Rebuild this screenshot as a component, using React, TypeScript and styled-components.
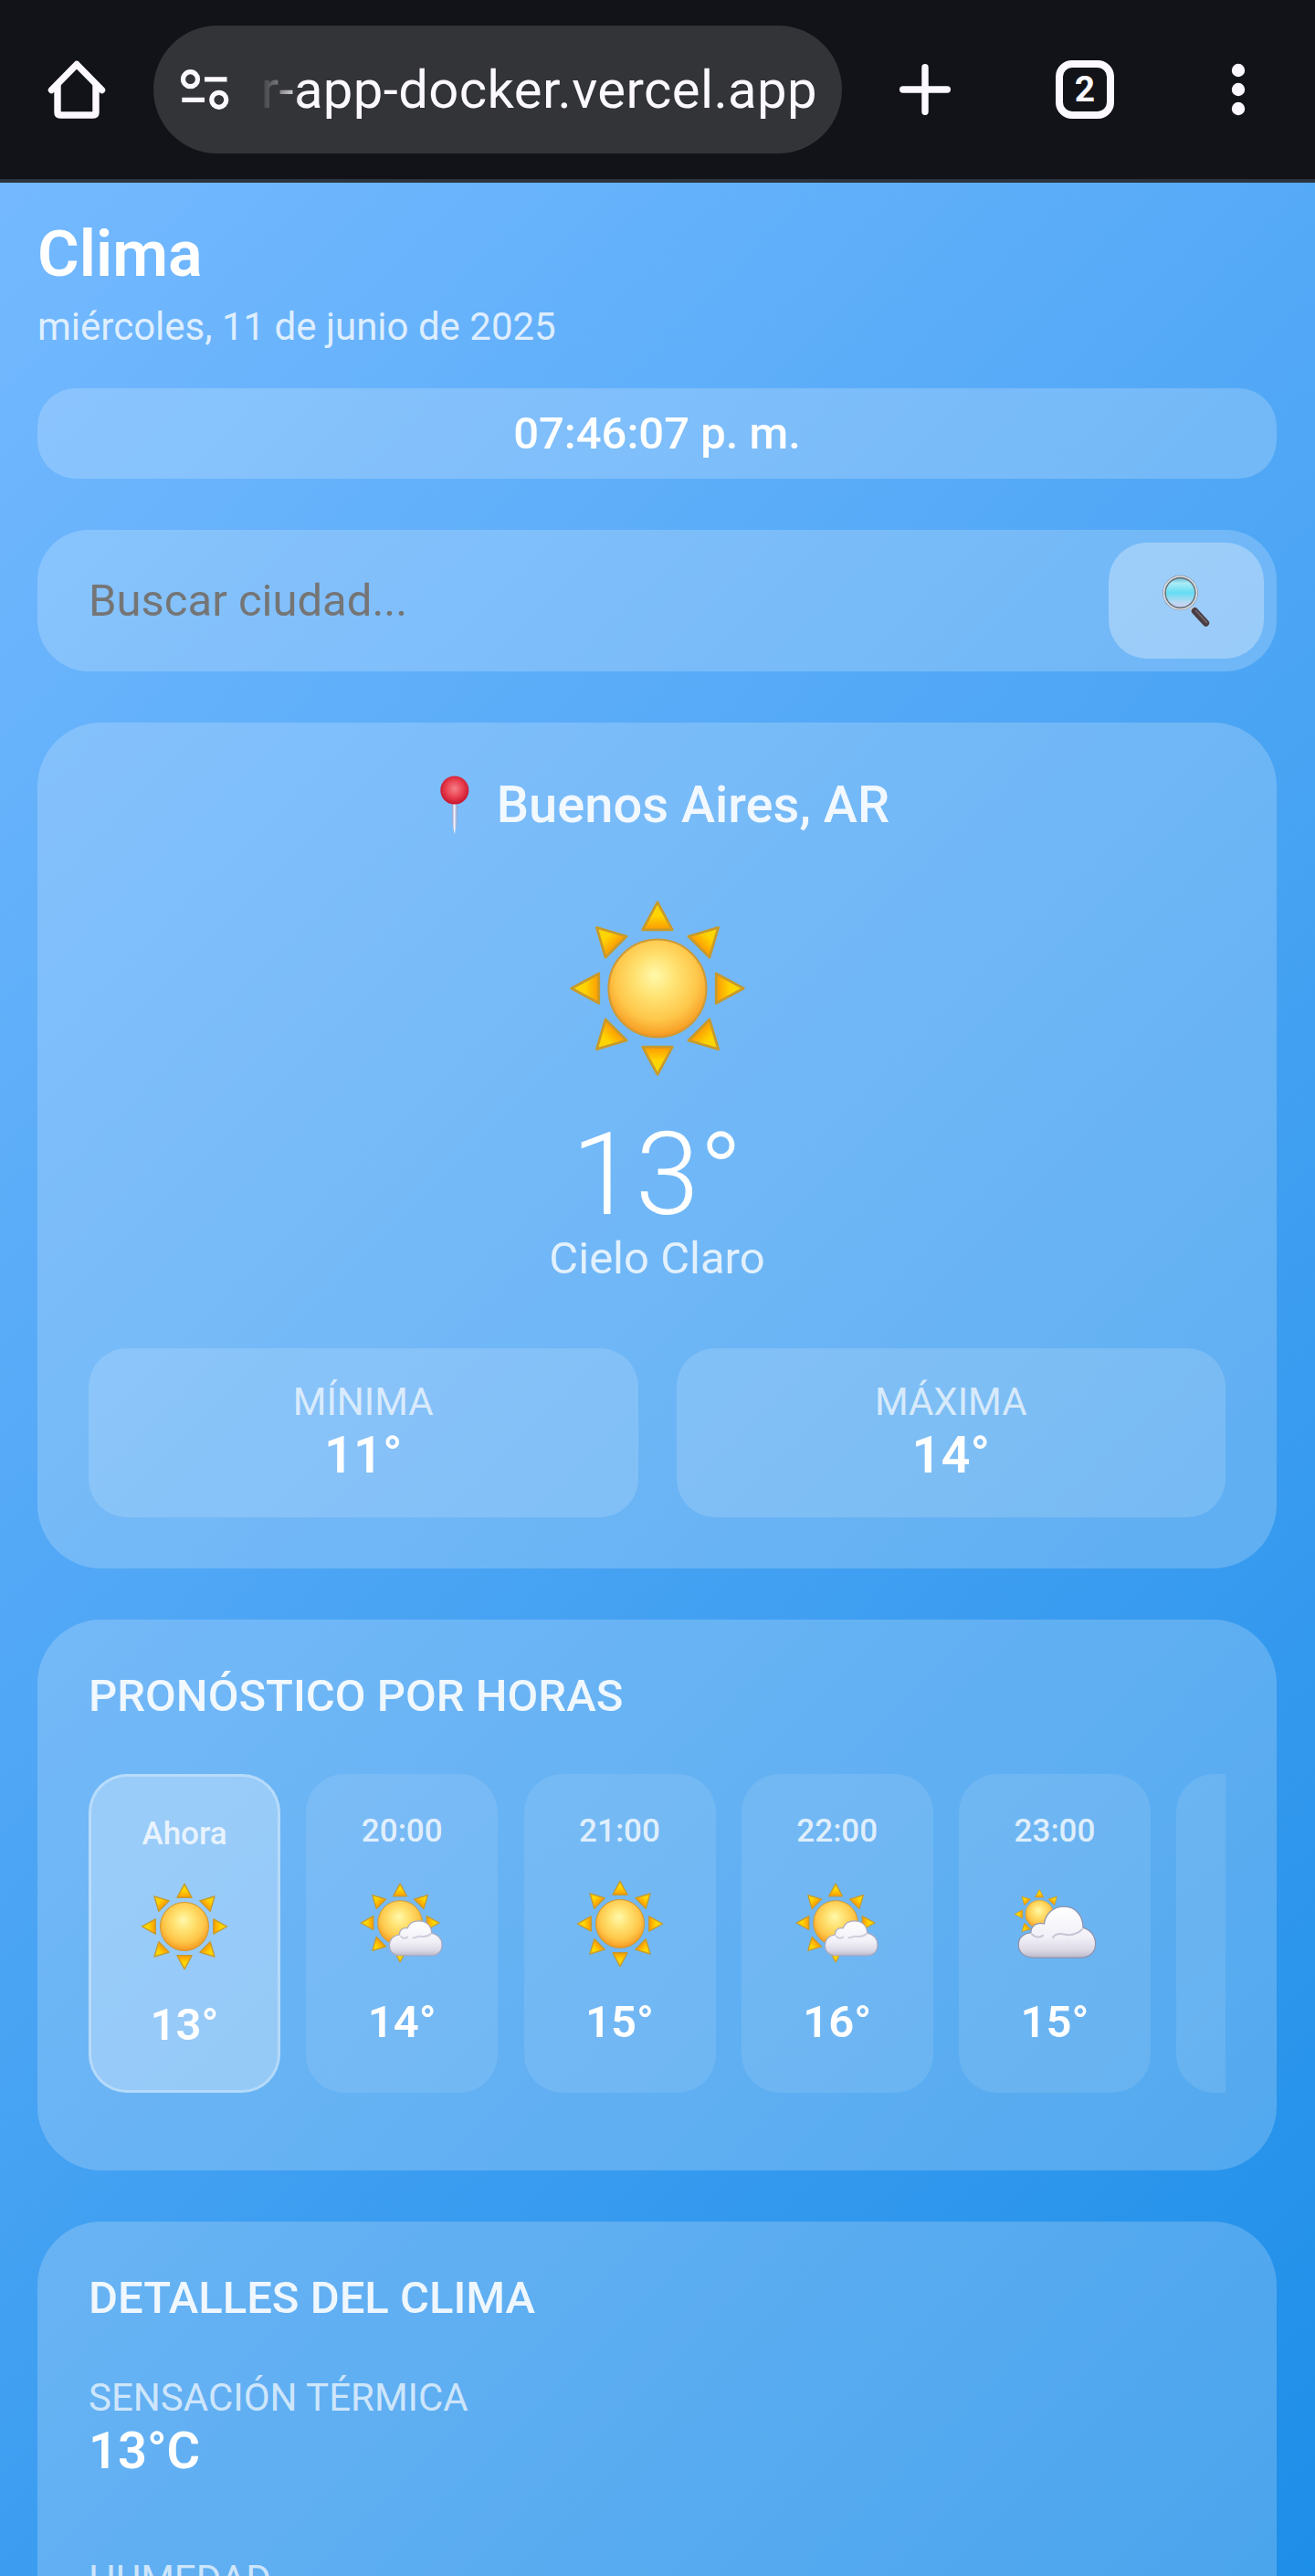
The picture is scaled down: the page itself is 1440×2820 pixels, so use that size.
import React, { useId } from 'react';
import styled, { createGlobalStyle, css } from 'styled-components';

const GlobalStyle = createGlobalStyle`
  *, *::before, *::after { box-sizing: border-box; }
  html, body { margin: 0; padding: 0; }
  body {
    font-family: Roboto, "Liberation Sans", sans-serif;
    color: #fff;
    background: #121318;
  }
`;

/* ---------- browser bar ---------- */

const Screen = styled.div`
  display: flex;
  flex-direction: column;
  width: 1440px;
  height: 2820px;
  overflow: hidden;
`;

const BrowserBar = styled.header`
  display: flex;
  align-items: center;
  flex: none;
  height: 200px;
  background: #121318;
  border-bottom: 4px solid #2d343d;
`;

const BarButton = styled.div<{ $width: number }>`
  display: flex;
  align-items: center;
  justify-content: center;
  width: ${({ $width }) => $width}px;
  height: 196px;
`;

const AddressPill = styled.div`
  display: flex;
  align-items: center;
  width: 754px;
  height: 140px;
  padding: 0 27px 0 28px;
  border-radius: 70px;
  background: #333438;
  overflow: hidden;
`;

const AddressText = styled.div`
  flex: 1;
  display: flex;
  justify-content: flex-end;
  margin-left: 24px;
  font-size: 58px;
  line-height: 80px;
  letter-spacing: 0.4px;
  color: #fbf9ff;
  white-space: nowrap;
  overflow: hidden;
  mask-image: linear-gradient(to right, transparent 6px, rgba(0, 0, 0, 0.3) 26px, #000 54px);
`;

const TabCount = styled.div`
  display: flex;
  align-items: center;
  justify-content: center;
  width: 64px;
  height: 64px;
  border: 8px solid #fbf9ff;
  border-radius: 18px;
  font-size: 39px;
  line-height: 40px;
  font-weight: 700;
  color: #fbf9ff;
`;

/* ---------- weather page ---------- */

const Page = styled.main`
  flex: none;
  display: flex;
  flex-direction: column;
  height: 3580px;
  padding: 36px 42px 0 41px;
  background: linear-gradient(135deg, #74b9ff 0%, #0984e3 100%);
`;

const Title = styled.h1`
  margin: 0;
  font-size: 70px;
  line-height: 84px;
  font-weight: 600;
`;

const DateLine = styled.p`
  margin: 13px 0 0;
  font-size: 42px;
  line-height: 50px;
  color: rgba(255, 255, 255, 0.8);
`;

const Clock = styled.div`
  margin-top: 42px;
  height: 99px;
  line-height: 99px;
  border-radius: 42px;
  background: rgba(255, 255, 255, 0.2);
  font-size: 49px;
  font-weight: 500;
  text-align: center;
`;

const SearchBox = styled.div`
  display: flex;
  align-items: center;
  margin-top: 56px;
  height: 155px;
  padding: 0 14px 0 56px;
  border-radius: 56px;
  background: rgba(255, 255, 255, 0.2);
`;

const SearchInput = styled.input`
  flex: 1;
  min-width: 0;
  padding: 0;
  border: 0;
  outline: 0;
  background: transparent;
  font: 400 49px/60px Roboto, "Liberation Sans", sans-serif;
  color: #fff;
  &::placeholder {
    color: #757575;
    opacity: 1;
  }
`;

const SearchButton = styled.button`
  display: flex;
  align-items: center;
  justify-content: center;
  width: 170px;
  height: 127px;
  padding: 0;
  border: 0;
  border-radius: 42px;
  background: rgba(255, 255, 255, 0.3);
`;

const Card = styled.section<{ $height: number }>`
  flex: none;
  display: flex;
  flex-direction: column;
  margin-top: 56px;
  height: ${({ $height }) => $height}px;
  padding: 56px;
  border-radius: 70px;
  background: rgba(255, 255, 255, 0.2);
`;

const Location = styled.div`
  display: flex;
  align-items: center;
  justify-content: center;
  gap: 28px;
  padding: 1px 0 0 15px;
  font-size: 56px;
  line-height: 66px;
  font-weight: 500;
  color: rgba(255, 255, 255, 0.9);
`;

const Current = styled.div`
  display: flex;
  flex-direction: column;
  align-items: center;
  margin-top: 71px;
`;

const Temperature = styled.div`
  height: 127px;
  margin-top: 37px;
  font-size: 126px;
  line-height: 140px;
  font-weight: 300;
`;

const Condition = styled.div`
  margin-top: 7px;
  font-size: 49px;
  line-height: 56px;
  color: rgba(255, 255, 255, 0.8);
`;

const RangeRow = styled.div`
  display: grid;
  grid-template-columns: 1fr 1fr;
  gap: 42px;
  margin-top: 70px;
`;

const RangeBox = styled.div`
  display: flex;
  flex-direction: column;
  align-items: center;
  height: 185px;
  padding-top: 34px;
  border-radius: 42px;
  background: rgba(255, 255, 255, 0.15);
`;

const Label = styled.div`
  font-size: 42px;
  line-height: 50px;
  color: rgba(255, 255, 255, 0.7);
`;

const Value = styled.div`
  font-size: 56px;
  line-height: 67px;
  font-weight: 600;
`;

const SectionTitle = styled.h2`
  margin: 0;
  font-size: 49px;
  line-height: 56px;
  font-weight: 500;
  color: rgba(255, 255, 255, 0.9);
`;

const HourStrip = styled.div`
  display: flex;
  gap: 28.25px;
  margin-top: 57px;
  overflow: hidden;
`;

const HourItem = styled.div<{ $active?: boolean }>`
  flex: none;
  display: flex;
  flex-direction: column;
  align-items: center;
  width: 210px;
  height: 349px;
  padding-top: 42px;
  border-radius: 42px;
  background: rgba(255, 255, 255, 0.1);
  ${({ $active }) =>
    $active &&
    css`
      background: rgba(255, 255, 255, 0.3);
      border: 3px solid rgba(255, 255, 255, 0.3);
    `}
`;

const HourTime = styled.div`
  font-size: 35px;
  line-height: 42px;
  font-weight: 500;
  color: rgba(255, 255, 255, 0.8);
`;

const HourIcon = styled.div`
  display: flex;
  margin: 32px 0;
`;

const HourTemp = styled.div`
  font-size: 49px;
  line-height: 56px;
  font-weight: 600;
`;

const DetailList = styled.div`
  display: flex;
  flex-direction: column;
  gap: 82px;
  margin-top: 56px;
`;

/* ---------- drawings ---------- */

const HomeIcon = () => (
  <svg width="72" height="72" viewBox="48 62 72 72" fill="none" stroke="#fbf9ff" strokeWidth="7.4" strokeLinecap="round" strokeLinejoin="round">
    <path d="M56.5 98.5 L84 70.5 L111.5 98.5" />
    <path d="M63 93 V123 Q63 126 66 126 H102 Q105 126 105 123 V93" />
  </svg>
);

const SiteSettingsIcon = () => (
  <svg width="56" height="50" viewBox="196 73 56 50" fill="none" stroke="#fbf9ff" strokeWidth="5.2">
    <circle cx="208.5" cy="86.7" r="8" />
    <path d="M224 86.9 H248.5 M199.3 109.3 H224" />
    <circle cx="239.8" cy="109.3" r="8" />
  </svg>
);

const PlusIcon = () => (
  <svg width="56" height="56" viewBox="0 0 56 56" stroke="#fbf9ff" strokeWidth="7.4" strokeLinecap="round">
    <path d="M3.7 28 H52.3 M28 3.7 V52.3" />
  </svg>
);

const DotsIcon = () => (
  <svg width="16" height="58" viewBox="0 0 16 58" fill="#fbf9ff">
    <circle cx="8" cy="8" r="7.2" />
    <circle cx="8" cy="29" r="7.2" />
    <circle cx="8" cy="50" r="7.2" />
  </svg>
);

const RAY_ANGLES = [0, 45, 90, 135, 180, 225, 270, 315];

const SunShape = ({ id }: { id: string }) => (
  <>
    <defs>
      <linearGradient id={`${id}r`} x1="0" y1="0" x2="0" y2="1">
        <stop offset="0" stopColor="#f6d60c" />
        <stop offset="0.5" stopColor="#ffd400" />
        <stop offset="1" stopColor="#fb9a05" />
      </linearGradient>
      <radialGradient id={`${id}d`} cx="0.5" cy="0.42" r="0.6" fx="0.47" fy="0.36">
        <stop offset="0" stopColor="#fff9ab" />
        <stop offset="0.35" stopColor="#ffe272" />
        <stop offset="0.7" stopColor="#fec74a" />
        <stop offset="0.9" stopColor="#f8a52a" />
        <stop offset="1" stopColor="#ee8a20" />
      </radialGradient>
    </defs>
    {RAY_ANGLES.map((angle) => (
      <path
        key={angle}
        d="M50 1.4 L58.4 16.9 H41.6 Z"
        transform={`rotate(${angle} 50 50)`}
        fill={`url(#${id}r)`}
        stroke="#c79a2b"
        strokeWidth="1.4"
        strokeLinejoin="round"
      />
    ))}
    <circle cx="50" cy="50" r="27.6" fill={`url(#${id}d)`} stroke="#cf9a35" strokeWidth="1.1" />
  </>
);

const cleanId = (id: string) => id.replace(/[^a-zA-Z0-9]/g, '');

const Sun = ({ size }: { size: number }) => {
  const id = cleanId(useId());
  return (
    <svg width={size} height={size} viewBox="0 0 100 100">
      <SunShape id={id} />
    </svg>
  );
};

const CloudDefs = ({ id }: { id: string }) => (
  <defs>
    <linearGradient id={`${id}c`} x1="0" y1="0" x2="0" y2="1">
      <stop offset="0" stopColor="#ffffff" />
      <stop offset="0.6" stopColor="#f1f0f7" />
      <stop offset="0.85" stopColor="#dcd9e6" />
      <stop offset="1" stopColor="#bcb9cb" />
    </linearGradient>
  </defs>
);

const SunSmallCloud = () => {
  const id = cleanId(useId());
  return (
    <svg width="96" height="96" viewBox="0 0 100 100">
      <CloudDefs id={id} />
      <g transform="translate(2 3) scale(.92)">
        <SunShape id={id} />
      </g>
      <path
        d="M48 86.2 C40 86.2 35.8 81 35.8 74.5 C35.8 68 40.5 63 47.5 62.5 C46.8 57.5 51 54 56.5 55 C58.5 49.5 63.5 46.8 69.5 46.8 C78 46.8 83.5 52 84 60.5 C92 62.5 95.8 67.5 95.8 74 C95.8 81.5 91 86.2 83.5 86.2 Z"
        fill={`url(#${id}c)`}
        stroke="#a9a9c0"
        strokeWidth="1.2"
      />
      <path
        d="M49 64.5 C51 66.8 54 66.8 56.5 65.2 M63 65.8 C66 66.8 67.5 63.5 71.5 64.4 C76.5 65.2 80.5 64 83 61.5"
        fill="none"
        stroke="#cfcddb"
        strokeWidth="2"
        strokeLinecap="round"
      />
    </svg>
  );
};

const SunBigCloud = () => {
  const id = cleanId(useId());
  return (
    <svg width="96" height="96" viewBox="0 0 100 100">
      <CloudDefs id={id} />
      <g transform="translate(3.5 10) scale(.58)">
        <SunShape id={id} />
      </g>
      <path
        d="M27 88.6 C15 88.6 8.6 82.5 8.6 74 C8.6 66 14.5 60.8 22.8 60.3 C22.5 52.5 30 47.3 38 50 C39 39.5 48 30.4 60.5 30.4 C73.5 30.4 82.3 40.5 82.3 54.5 C91.5 57 96.5 64.5 96.5 73 C96.5 82.5 90 88.6 78.5 88.6 Z"
        fill={`url(#${id}c)`}
        stroke="#8f93ac"
        strokeWidth="1.3"
      />
      <path
        d="M24 62 C27 65.5 32 66 36.5 63.5 M48 65.5 C51 60.5 57 61 62 62.2 C69 63.8 76.5 61.5 81 56.5"
        fill="none"
        stroke="#c8c6d5"
        strokeWidth="2.2"
        strokeLinecap="round"
      />
    </svg>
  );
};

const PinIcon = () => (
  <svg width="36" height="66" viewBox="0 0 36 66">
    <defs>
      <radialGradient id="pinHead" cx="0.5" cy="0.45" r="0.56">
        <stop offset="0" stopColor="#f6808a" />
        <stop offset="0.55" stopColor="#e9404f" />
        <stop offset="1" stopColor="#c4122c" />
      </radialGradient>
      <linearGradient id="pinNeedle" x1="0" y1="0" x2="1" y2="0">
        <stop offset="0" stopColor="#8b93b8" />
        <stop offset="0.45" stopColor="#eef2ff" />
        <stop offset="1" stopColor="#8f96ba" />
      </linearGradient>
    </defs>
    <path d="M14.8 30 H20.8 L20.2 55 L17.8 65 L15.4 55 Z" fill="url(#pinNeedle)" />
    <circle cx="17.8" cy="17" r="15.5" fill="url(#pinHead)" />
  </svg>
);

const MagnifierIcon = () => (
  <svg width="54" height="58" viewBox="0 0 54 58">
    <defs>
      <linearGradient id="lens" x1="0" y1="0" x2="0" y2="1">
        <stop offset="0" stopColor="#5fb6cc" />
        <stop offset="0.2" stopColor="#a9ecf6" />
        <stop offset="0.5" stopColor="#63dcf2" />
        <stop offset="0.8" stopColor="#b9d9f3" />
        <stop offset="1" stopColor="#d2cdf0" />
      </linearGradient>
    </defs>
    <path d="M32.5 36.5 L36.5 41" stroke="#d9cfc8" strokeWidth="4" />
    <path d="M36.5 40 L48.5 53" stroke="#4a3d44" strokeWidth="7.4" strokeLinecap="round" />
    <path d="M37.5 39.5 L49.5 52.5" stroke="#75676e" strokeWidth="1.6" strokeLinecap="round" />
    <circle cx="20.5" cy="20" r="17.4" fill="url(#lens)" stroke="#6c7680" strokeWidth="3.6" />
    <circle cx="20.5" cy="20" r="18" fill="none" stroke="#dfe0e2" strokeWidth="1.7" />
  </svg>
);

/* ---------- data ---------- */

type Sky = 'sun' | 'sunSmallCloud' | 'sunBigCloud';

const hours: { time: string; sky: Sky; temp: string }[] = [
  { time: 'Ahora', sky: 'sun', temp: '13°' },
  { time: '20:00', sky: 'sunSmallCloud', temp: '14°' },
  { time: '21:00', sky: 'sun', temp: '15°' },
  { time: '22:00', sky: 'sunSmallCloud', temp: '16°' },
  { time: '23:00', sky: 'sunBigCloud', temp: '15°' },
];

const SkyIcon = ({ sky }: { sky: Sky }) => {
  if (sky === 'sun') return <Sun size={96} />;
  if (sky === 'sunSmallCloud') return <SunSmallCloud />;
  return <SunBigCloud />;
};

export default function App() {
  return (
    <Screen>
      <GlobalStyle />
      <BrowserBar>
        <BarButton $width={168}>
          <HomeIcon />
        </BarButton>
        <AddressPill>
          <SiteSettingsIcon />
          <AddressText>r-app-docker.vercel.app</AddressText>
        </AddressPill>
        <BarButton $width={182}>
          <PlusIcon />
        </BarButton>
        <BarButton $width={168}>
          <TabCount>2</TabCount>
        </BarButton>
        <BarButton $width={168}>
          <DotsIcon />
        </BarButton>
      </BrowserBar>

      <Page>
        <Title>Clima</Title>
        <DateLine>miércoles, 11 de junio de 2025</DateLine>
        <Clock>07:46:07 p. m.</Clock>

        <SearchBox>
          <SearchInput placeholder="Buscar ciudad..." />
          <SearchButton>
            <MagnifierIcon />
          </SearchButton>
        </SearchBox>

        <Card $height={926}>
          <Location>
            <PinIcon />
            Buenos Aires, AR
          </Location>
          <Current>
            <Sun size={194} />
            <Temperature>13°</Temperature>
            <Condition>Cielo Claro</Condition>
          </Current>
          <RangeRow>
            <RangeBox>
              <Label>MÍNIMA</Label>
              <Value>11°</Value>
            </RangeBox>
            <RangeBox>
              <Label>MÁXIMA</Label>
              <Value>14°</Value>
            </RangeBox>
          </RangeRow>
        </Card>

        <Card $height={603}>
          <SectionTitle>PRONÓSTICO POR HORAS</SectionTitle>
          <HourStrip>
            {hours.map(({ time, sky, temp }, index) => (
              <HourItem key={time} $active={index === 0}>
                <HourTime>{time}</HourTime>
                <HourIcon>
                  <SkyIcon sky={sky} />
                </HourIcon>
                <HourTemp>{temp}</HourTemp>
              </HourItem>
            ))}
            <HourItem />
          </HourStrip>
        </Card>

        <Card $height={900}>
          <SectionTitle>DETALLES DEL CLIMA</SectionTitle>
          <DetailList>
            <div>
              <Label>SENSACIÓN TÉRMICA</Label>
              <Value>13°C</Value>
            </div>
            <div>
              <Label>HUMEDAD</Label>
            </div>
          </DetailList>
        </Card>
      </Page>
    </Screen>
  );
}
